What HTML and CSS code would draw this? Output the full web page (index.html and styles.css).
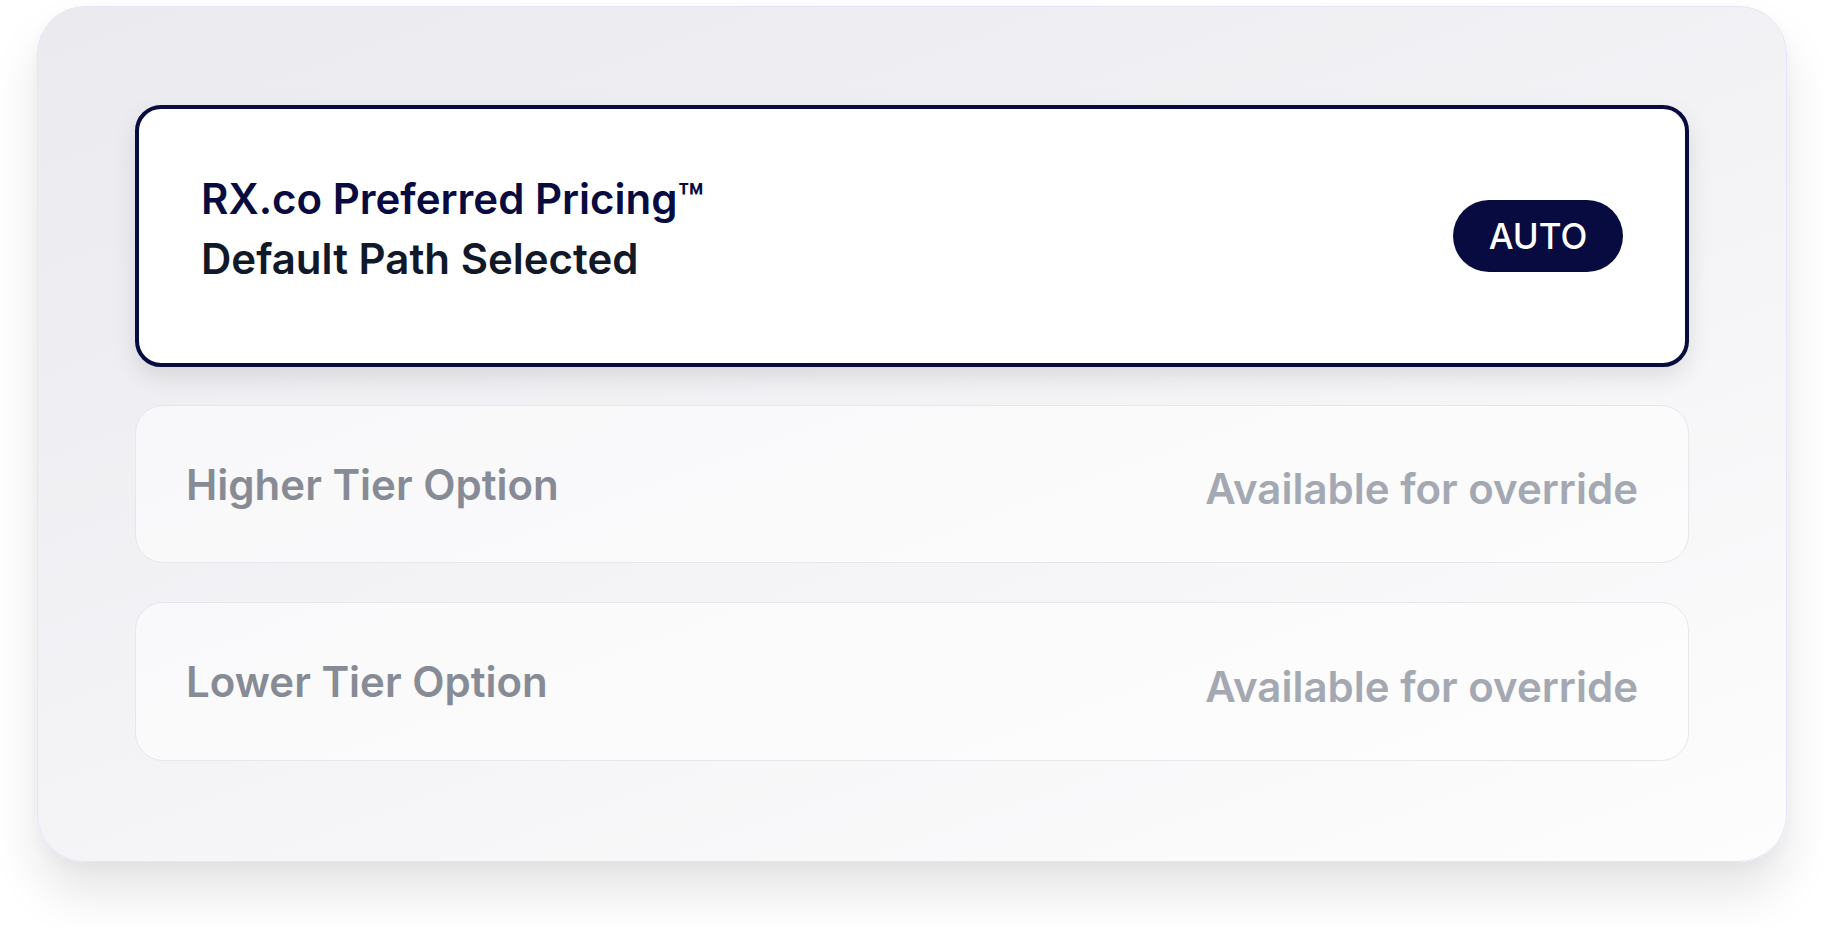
FILE: index.html
```html
<!DOCTYPE html>
<html lang="en">
<head>
<meta charset="utf-8">
<title>Pricing Path</title>
<link rel="stylesheet" href="styles.css">
</head>
<body>
<div class="page">
  <section class="frame">
    <div class="option option--selected">
      <div class="option__text">
        <div class="option__title">RX.co Preferred Pricing™</div>
        <div class="option__subtitle">Default Path Selected</div>
      </div>
      <span class="badge">AUTO</span>
    </div>
    <div class="option option--alt">
      <div class="option__label">Higher Tier Option</div>
      <div class="option__status">Available for override</div>
    </div>
    <div class="option option--alt">
      <div class="option__label">Lower Tier Option</div>
      <div class="option__status">Available for override</div>
    </div>
  </section>
</div>
</body>
</html>
```

FILE: styles.css
```css
* { box-sizing: border-box; }

html, body {
  margin: 0;
  padding: 0;
  background: #ffffff;
  font-family: Inter, "Noto Sans", "Liberation Sans", sans-serif;
}

.page {
  min-height: 928px;
  padding: 6px 37px 66px;
}

.frame {
  width: 1750px;
  height: 856px;
  border: 1px solid #ece1fc;
  border-radius: 48px;
  padding: 98px 97px 100px;
  background: linear-gradient(160deg, #eaeaef 0%, #f3f3f6 50%, #fdfdfd 100%);
  box-shadow: 0 32px 50px rgba(0, 0, 0, 0.10), 0 6px 16px rgba(0, 0, 0, 0.03);
  display: flex;
  flex-direction: column;
  gap: 38px;
}

.option {
  display: flex;
  align-items: center;
  justify-content: space-between;
}

.option--selected {
  height: 262px;
  border: 4px solid #070b3f;
  border-radius: 26px;
  background: #ffffff;
  padding: 0 62px 0 62px;
  box-shadow: 0 10px 24px rgba(0, 0, 0, 0.10);
}

.option__text {
  margin-bottom: 14px;
}

.option__title {
  font-size: 42px;
  line-height: 60px;
  font-weight: 600;
  color: #070b3f;
}

.option__subtitle {
  font-size: 42px;
  line-height: 60px;
  font-weight: 600;
  color: #111827;
}

.badge {
  display: inline-flex;
  align-items: center;
  justify-content: center;
  width: 170px;
  height: 72px;
  border-radius: 36px;
  background: #070b3f;
  color: #ffffff;
  font-size: 35px;
  font-weight: 500;
}

.option--alt {
  height: 158px;
  border: 1px solid #e6e7eb;
  border-radius: 28px;
  background: rgba(255, 255, 255, 0.55);
  padding: 0 50px 0 50px;
}

.option--alt + .option--alt {
  height: 159px;
  margin-top: 1px;
}

.option__label {
  font-size: 42px;
  font-weight: 600;
  color: #868b95;
}

.option__status {
  font-size: 42px;
  font-weight: 600;
  color: #a4a8b2;
  margin-top: 9px;
}
```
